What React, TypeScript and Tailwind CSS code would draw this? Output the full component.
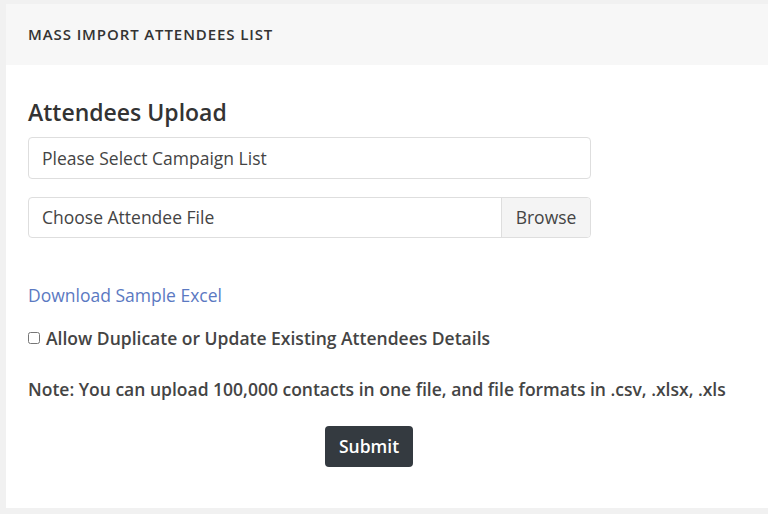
export default function App() {
  return (
    <div className="min-h-screen bg-[#f1f1f1] pt-[4px] pl-[6px] pb-[6px] font-['Open_Sans',sans-serif] text-[#444]">
      <div className="bg-white">
        <div className="flex h-[61px] items-center bg-[#f7f7f7] px-[22px]">
          <h2 className="text-[15px] font-semibold uppercase tracking-[0.06em] text-[#333]">
            Mass Import Attendees List
          </h2>
        </div>
        <div className="px-[22px] pt-[31px] pb-[41px]">
          <h1 className="text-[23px] font-semibold leading-[32px] text-[#333]">Attendees Upload</h1>
          <div className="mt-[9px] w-[563px]">
            <div className="flex h-[42px] items-center rounded-[4px] border border-[#dedede] px-[13px] text-[17.5px]">
              Please Select Campaign List
            </div>
            <div className="mt-[18px] flex h-[41px] items-stretch overflow-hidden rounded-[4px] border border-[#dedede] text-[17.5px]">
              <div className="flex flex-1 items-center px-[13px]">Choose Attendee File</div>
              <div className="flex w-[89px] items-center justify-center border-l border-[#dedede] bg-[#f4f4f4]">
                Browse
              </div>
            </div>
          </div>
          <a href="#" className="mt-[45px] block text-[17.5px] leading-[24px] text-[#5b79c2]">
            Download Sample Excel
          </a>
          <label className="mt-[19px] flex items-center gap-[6px] text-[17.5px] font-semibold leading-[24px]">
            <input type="checkbox" className="h-[12px] w-[12px] accent-[#444]" />
            Allow Duplicate or Update Existing Attendees Details
          </label>
          <p className="mt-[27px] text-[17.5px] font-semibold leading-[24px]">
            Note: You can upload 100,000 contacts in one file, and file formats in .csv, .xlsx, .xls
          </p>
          <div className="mt-[25px] mr-[36px] flex justify-center">
            <button className="h-[41px] rounded-[4px] bg-[#343a40] px-[14px] text-[17.5px] font-semibold text-white">
              Submit
            </button>
          </div>
        </div>
      </div>
    </div>
  );
}
